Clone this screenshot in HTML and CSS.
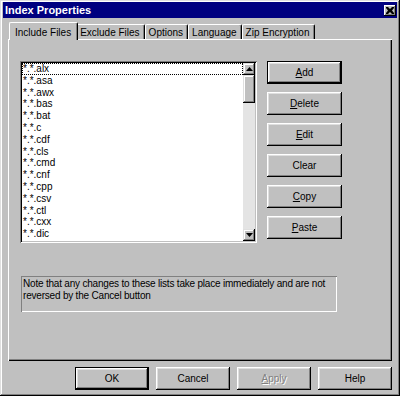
FILE: index.html
```html
<!DOCTYPE html>
<html lang="en">
<head>
    <meta charset="UTF-8">
    <title>Index Properties</title>
    <link rel="stylesheet" href="styles.css">
</head>
<body>
    <div class="window">
        <div class="titlebar">
            <span class="title">Index Properties</span>
            <span class="close">
                <svg width="8" height="7" viewBox="0 0 8 7">
                    <path d="M0 0h2l2 2 2-2h2v1l-2 2.5 2 2.5v1h-2l-2-2-2 2h-2v-1l2-2.5-2-2.5z" fill="#000"/>
                </svg>
            </span>
        </div>
        <div class="tabs">
            <div class="tab active">Include Files</div>
            <div class="tab">Exclude Files</div>
            <div class="tab">Options</div>
            <div class="tab">Language</div>
            <div class="tab">Zip Encryption</div>
        </div>
        <div class="panel">
            <div class="panel-row">
                <div class="listbox">
                    <ul class="items">
                        <li class="focused">*.*.alx</li>
                        <li>*.*.asa</li>
                        <li>*.*.awx</li>
                        <li>*.*.bas</li>
                        <li>*.*.bat</li>
                        <li>*.*.c</li>
                        <li>*.*.cdf</li>
                        <li>*.*.cls</li>
                        <li>*.*.cmd</li>
                        <li>*.*.cnf</li>
                        <li>*.*.cpp</li>
                        <li>*.*.csv</li>
                        <li>*.*.ctl</li>
                        <li>*.*.cxx</li>
                        <li>*.*.dic</li>
                    </ul>
                    <div class="scrollbar">
                        <div class="arrow">
                            <svg width="7" height="4" viewBox="0 0 7 4"><path d="M3.5 0L7 4H0z" fill="#000"/></svg>
                        </div>
                        <div class="thumb"></div>
                        <div class="track"></div>
                        <div class="arrow">
                            <svg width="7" height="4" viewBox="0 0 7 4"><path d="M0 0h7L3.5 4z" fill="#000"/></svg>
                        </div>
                    </div>
                </div>
                <div class="side-buttons">
                    <button class="btn default"><u>A</u>dd</button>
                    <button class="btn"><u>D</u>elete</button>
                    <button class="btn"><u>E</u>dit</button>
                    <button class="btn">Clear</button>
                    <button class="btn"><u>C</u>opy</button>
                    <button class="btn"><u>P</u>aste</button>
                </div>
            </div>
            <div class="note">Note that any changes to these lists take place immediately and are not<br>reversed by the Cancel button</div>
        </div>
        <div class="footer">
            <button class="btn default">OK</button>
            <button class="btn">Cancel</button>
            <button class="btn disabled"><u>A</u>pply</button>
            <button class="btn">Help</button>
        </div>
    </div>
</body>
</html>
```

FILE: styles.css
```css
body {
    margin: 0;
    background-color: #c0c0c0;
    font-family: 'Liberation Sans', Arial, sans-serif;
    font-size: 10px;
    color: #000;
}
.window {
    width: 400px;
    height: 396px;
    box-sizing: border-box;
    padding: 2px 3px;
    background-color: #c0c0c0;
    box-shadow: inset -1px -1px #000, inset 1px 1px #dfdfdf, inset -2px -2px #808080, inset 2px 2px #fff;
}
.titlebar {
    height: 16px;
    display: flex;
    align-items: center;
    justify-content: space-between;
    padding: 0 1px 0 2px;
    background-color: #000080;
    color: #fff;
}
.title {
    font-size: 11px;
    font-weight: bold;
}
.close {
    width: 12px;
    height: 11px;
    display: flex;
    align-items: center;
    justify-content: center;
    background-color: #c0c0c0;
    box-shadow: inset -1px -1px #000, inset 1px 1px #fff, inset -2px -2px #808080;
}
.tabs {
    display: flex;
    align-items: flex-end;
    height: 17px;
    margin: 4px 5px 0;
    padding-left: 3px;
}
.tab {
    box-sizing: border-box;
    height: 15px;
    padding: 1px 4px 0 3px;
    line-height: 13px;
    border-top: 1px solid #fff;
    border-left: 1px solid #fff;
    border-right: 1px solid #000;
    border-radius: 2px 2px 0 0;
    box-shadow: inset -1px 0 #808080;
    white-space: nowrap;
}
.tab.active {
    position: relative; /* passe au-dessus du bord du panneau */
    z-index: 1;
    height: 18px;
    margin: 0 -2px -1px;
    padding: 3px 6px 0 5px;
    background-color: #c0c0c0;
}
.panel {
    height: 322px;
    box-sizing: border-box;
    margin: 0 5px;
    padding: 22px 12px 0 12px;
    box-shadow: inset 1px 1px #fff, inset -1px -1px #000, inset -2px -2px #808080;
}
.panel-row {
    display: flex;
    gap: 10px;
}
.listbox {
    width: 237px;
    height: 182px;
    box-sizing: border-box;
    display: flex;
    padding: 2px;
    background-color: #fff;
    box-shadow: inset 1px 1px #808080, inset -1px -1px #fff, inset 2px 2px #000, inset -2px -2px #c0c0c0;
}
.items {
    flex: 1;
    margin: 0;
    padding: 0;
    list-style: none;
    overflow: hidden;
}
.items li {
    height: 11.8px;
    line-height: 12px;
    padding-left: 1px;
    white-space: nowrap;
}
.items li.focused {
    outline: 1px dotted #000;
    outline-offset: -1px;
}
.scrollbar {
    width: 12px;
    display: flex;
    flex-direction: column;
}
.arrow, .thumb {
    box-sizing: border-box;
    background-color: #c0c0c0;
    box-shadow: inset -1px -1px #000, inset 1px 1px #dfdfdf, inset -2px -2px #808080, inset 2px 2px #fff;
}
.arrow {
    height: 12px;
    display: flex;
    align-items: center;
    justify-content: center;
}
.thumb {
    height: 28px;
}
.track {
    flex: 1;
    background-color: #e4e4e4;
}
.side-buttons {
    display: flex;
    flex-direction: column;
    gap: 8px;
}
.btn {
    width: 75px;
    height: 23px;
    box-sizing: border-box;
    padding: 0;
    border: none;
    background-color: #c0c0c0;
    font-family: inherit;
    font-size: 10px;
    color: #000;
    box-shadow: inset -1px -1px #000, inset 1px 1px #fff, inset -2px -2px #808080, inset 2px 2px #dfdfdf;
}
.btn.default {
    border: 1px solid #000;
}
.btn.disabled {
    color: #808080;
    text-shadow: 1px 1px #fff;
}
.note {
    width: 316px;
    height: 36px;
    box-sizing: border-box;
    margin: 33px 0 0 1px;
    padding: 2px 1px 0 2px;
    line-height: 12px;
    letter-spacing: -0.2px;
    white-space: nowrap;
    overflow: hidden;
    box-shadow: inset 1px 1px #808080, inset -1px -1px #fff;
}
.footer {
    display: flex;
    justify-content: flex-end;
    gap: 7px;
    margin: 6px 5px 0;
}
.footer .btn {
    width: 74px;
}
```
